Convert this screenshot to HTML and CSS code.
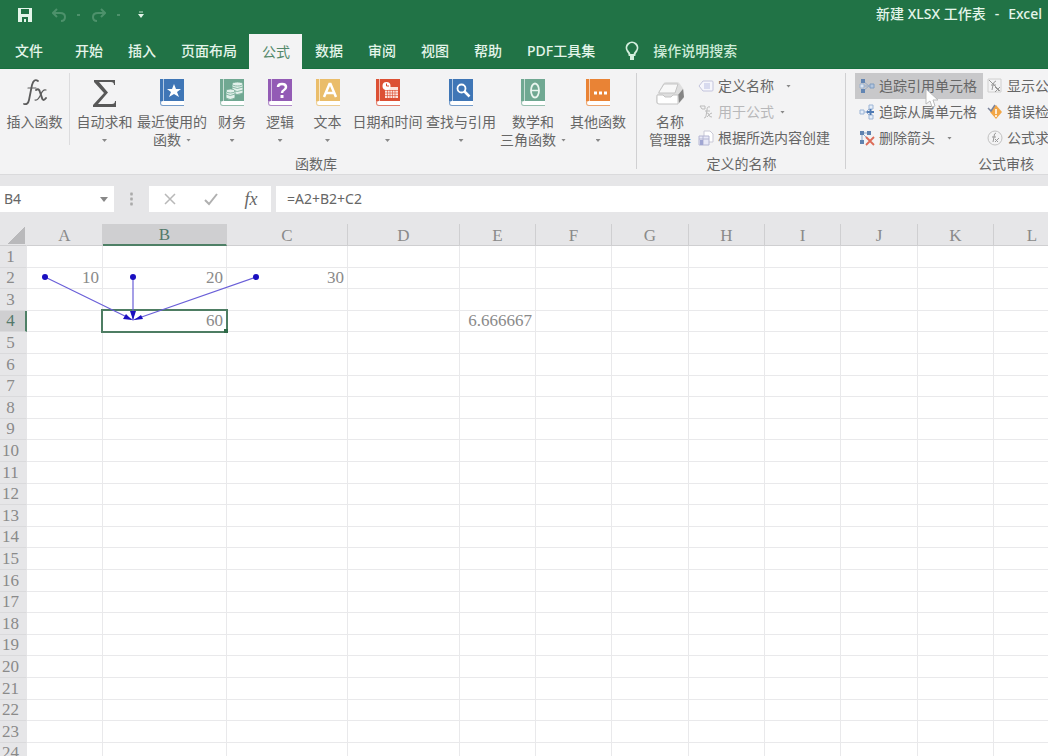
FILE: index.html
```html
<!DOCTYPE html>
<html lang="zh-CN">
<head>
<meta charset="utf-8">
<title>新建 XLSX 工作表 - Excel</title>
<link rel="stylesheet" href="styles.css">
</head>
<body>
<svg class="defs" aria-hidden="true">
  <symbol id="book" viewBox="0 0 26 29">
    <path d="M1 1h24v22H1z" fill="currentColor"/>
    <path d="M1 23h24v4H3q-2 0-2-2z" fill="#fff"/>
    <path d="M1 23v2q0 3 3 3h21v-1H4q-2 0-2-2t2-2z" fill="currentColor" fill-opacity=".7"/>
    <path d="M4.500 1v22" stroke="#fff" stroke-opacity=".6" stroke-width="1"/>
  </symbol>
</svg>

<header class="top">
  <div class="titlebar">
    <div class="quick">
      <button aria-label="保存"><svg width="14" height="14" viewBox="0 0 14 14"><path d="M0 0h14v14H0z" fill="#e4f5ea"/><path d="M3 1h8v5H3zM4 9h6v5H8v-3H6v3H4z" fill="#217346"/></svg></button>
      <button aria-label="撤消"><svg width="14" height="14" viewBox="0 0 14 14" class="faint"><path d="M5 1 1 5l4 4M1 5h7q5 0 5 4t-4 4"/></svg></button>
      <span class="caret"></span>
      <button aria-label="恢复"><svg width="14" height="14" viewBox="0 0 14 14" class="faint"><path d="m9 1 4 4-4 4M13 5H6Q1 5 1 9t4 4"/></svg></button>
      <span class="caret"></span>
      <button aria-label="自定义快速访问工具栏" class="more"><svg width="6" height="8" viewBox="0 0 6 8"><path d="M1 1h4" stroke="#b9dcc7"/><path d="M0 3h6L3 7z" fill="#e4f5ea"/></svg></button>
    </div>
    <div class="doc"><span>新建 XLSX 工作表</span><span>-</span><span>Excel</span></div>
  </div>
  <nav class="tabs">
    <button class="file">文件</button><button>开始</button><button>插入</button><button>页面布局</button><button class="active">公式</button><button>数据</button><button>审阅</button><button>视图</button><button>帮助</button><button>PDF工具集</button>
    <button class="tell"><svg width="14" height="20" viewBox="0 0 14 20"><path d="M4.500 14q0-2-2-4A5.500 5.500 0 1 1 11.500 10q-2 2-2 4z" fill="none" stroke="#d3eedd" stroke-width="1.800"/><path d="M5 16h4M5 18h4" stroke="#d3eedd" stroke-width="2"/></svg>操作说明搜索</button>
  </nav>
</header>

<main>
<section class="ribbon">
  <div class="group library">
    <div class="tools">
      <button class="big insert"><svg class="ic" width="30" height="30" viewBox="0 0 30 30"><g fill="none" stroke="#5c5c5c" stroke-linecap="round"><path d="M18 3q-4-3-6 4L9 22q-1 5-5 4" stroke-width="1.800"/><path d="M8 10h8" stroke-width="1.200"/><path d="M16 12q3-2 4 2l2 6q1 4 4 0" stroke-width="2"/><path d="M26 12q-3-1-5 4-3 7-6 6" stroke-width="1.200"/></g></svg>插入函数</button>
      <button class="big"><svg class="ic" width="26" height="30" viewBox="0 0 26 30"><path d="M2 2h21v5h-1q0-3-3-3H7l9 10.500L6 26h14q3 0 3-3h1v6H1v-2l11-12L2 4z" fill="#585858"/></svg>自动求和<i class="drop"></i></button>
      <button class="big"><svg class="ic blue" width="26" height="30" viewBox="0 0 26 30"><use href="#book" width="26" height="29"/><path d="m15 6 2 5h5l-4 3 2 5-5-3-5 3 2-5-4-3h5z" fill="#fff"/></svg>最近使用的<span>函数<i class="drop"></i></span></button>
      <button class="big"><svg class="ic teal" width="26" height="30" viewBox="0 0 26 30"><use href="#book" width="26" height="29"/><g fill="#e3f1eb" stroke="#70a892" stroke-width=".8"><path d="M13 6v9q5 3 11 0V6z"/><ellipse cx="18.500" cy="6" rx="5.500" ry="2"/><path d="M13 9q5 3 11 0M13 12q5 3 11 0" fill="none"/><path d="M7 13v7q4 3 9 0v-7z"/><ellipse cx="11.500" cy="13" rx="4.500" ry="2"/><path d="M7 16q4 3 9 0" fill="none"/></g></svg>财务<i class="drop"></i></button>
      <button class="big"><svg class="ic purple" width="26" height="30" viewBox="0 0 26 30"><use href="#book" width="26" height="29"/><path d="M11 9q0-3 4-3t4 3q0 2-2 3t-2 3" fill="none" stroke="#fff" stroke-width="2.500"/><path d="M13.500 17h3v3h-3z" fill="#fff"/></svg>逻辑<i class="drop"></i></button>
      <button class="big"><svg class="ic gold" width="26" height="30" viewBox="0 0 26 30"><use href="#book" width="26" height="29"/><path d="m9 19 5.500-13h1L21 19M11 15h8" fill="none" stroke="#fff" stroke-width="2.500"/></svg>文本<i class="drop"></i></button>
      <button class="big"><svg class="ic red" width="26" height="30" viewBox="0 0 26 30"><use href="#book" width="26" height="29"/><path d="M10 9h13v11H10z" fill="#fbe3dd"/><path d="M10 12.500h13M10 15h13M10 17.500h13M12.500 12v8M15 12v8M17.500 12v8M20 12v8" stroke="#dc4a2e" stroke-width=".6"/><circle cx="11.500" cy="8" r="4" fill="#fff"/><path d="M11.500 5.500V8H14" fill="none" stroke="#dc4a2e"/></svg>日期和时间<i class="drop"></i></button>
      <button class="big"><svg class="ic blue" width="26" height="30" viewBox="0 0 26 30"><use href="#book" width="26" height="29"/><circle cx="13.500" cy="10.500" r="4" fill="none" stroke="#fff" stroke-width="1.800"/><path d="m16.500 13.500 5 5" stroke="#fff" stroke-width="2.500"/></svg>查找与引用<i class="drop"></i></button>
      <button class="big"><svg class="ic teal" width="26" height="30" viewBox="0 0 26 30"><use href="#book" width="26" height="29"/><ellipse cx="15" cy="12.500" rx="4" ry="7" fill="none" stroke="#e9f5ef" stroke-width="1.800"/><path d="M11 12.500h8" stroke="#e9f5ef" stroke-width="1.500"/></svg>数学和<span>三角函数<i class="drop"></i></span></button>
      <button class="big"><svg class="ic orange" width="26" height="30" viewBox="0 0 26 30"><use href="#book" width="26" height="29"/><path d="M9 13.500h3v3H9zM14 13.500h3v3h-3zM19 13.500h3v3h-3z" fill="#fff"/></svg>其他函数<i class="drop"></i></button>
    </div>
    <h2>函数库</h2>
  </div>

  <div class="group names">
    <div class="tools">
      <button class="big"><svg class="ic" width="30" height="30" viewBox="0 0 30 30"><path d="M2 17 8 6q1-2 3-2h11q2 0 3 2l4 6v8l-6 6H3q-2 0-2-3v-4z" fill="#dedede"/><path d="m23 17 5-6 1 8-5 6z" fill="#858585"/><path d="M4 14 9 6h14l-3 9H4z" fill="#f8f8f8" stroke="#c4c4c4"/><path d="M2 17h6l2 2h6l2-2h5v9H4q-2 0-2-2z" fill="#fff" stroke="#c4c4c4"/></svg>名称<span>管理器</span></button>
      <div class="stack">
        <button><svg width="16" height="16" viewBox="0 0 16 16"><path d="M5 3h9q1 0 1 1v8q0 1-1 1H5L1 8z" fill="#f6f6fc" stroke="#c3c4dc"/><path d="M6 6h6M6 8h6M6 10h6" stroke="#b9bee2"/></svg>定义名称<i class="drop far"></i></button>
        <button disabled><svg width="16" height="16" viewBox="0 0 16 16" fill="none" stroke="#bbb"><path d="M2 2h5v3H4zM12 3q-3-1-3 3l-1 6q0 2-2 2M7 7h5M9 9q2 0 2 2t3 2M14 9q-2 0-5 4"/></svg>用于公式<i class="drop"></i></button>
        <button><svg width="16" height="16" viewBox="0 0 16 16"><path d="M6 1h6l3 3v8H6z" fill="#fff" stroke="#c9c9d6"/><path d="M1 6h10v9H1z" fill="#e8e9f7" stroke="#b4b6d2"/><path d="M1 9h10M5 6v9" stroke="#b4b6d2"/><path d="M2 10h3v5H2z" fill="#a0a6d2"/></svg>根据所选内容创建</button>
      </div>
    </div>
    <h2>定义的名称</h2>
  </div>

  <div class="group audit">
    <div class="tools">
      <div class="stack">
        <button class="hover"><svg width="16" height="16" viewBox="0 0 16 16"><path d="m4 3 6 5-6 5M5 8h6" fill="none" stroke="#97abc7"/><path d="M2 1h4v4H2zM2 11h4v4H2z" fill="#6285b3"/><path d="M1 6h4v4H1z" fill="#dce6f2" stroke="#9cb3d0"/><path d="M11 6h4v4h-4z" fill="#b3c6df" stroke="#7f9cc0"/></svg>追踪引用单元格<svg class="cursor" width="14" height="20" viewBox="0 0 14 20"><path d="M1 1v15l4-3 2 6 3-1-2-6h5z" fill="#fff" stroke="#bbb"/></svg></button>
        <button><svg width="16" height="16" viewBox="0 0 16 16"><path d="M4 8h5M12 3 7 8l5 5" fill="none" stroke="#9bafd0"/><path d="M1 6h4v4H1zM10 1h4v4h-4zM10 11h4v4h-4z" fill="#e5edf8" stroke="#9cb5d6"/><path d="M8 8h7M11.500 5v6" stroke="#4f7bb5" stroke-width="2"/></svg>追踪从属单元格</button>
        <button><svg width="16" height="16" viewBox="0 0 16 16"><path d="M3 3h8M3 3v10M4 4l5 5" stroke="#8fa9cb"/><path d="M1 1h4v4H1zM8 1h4v4H8zM1 10h4v4H1z" fill="#5f82af"/><path d="m7 7 8 8M15 7l-8 8" stroke="#dc6b58" stroke-width="1.800"/></svg>删除箭头<i class="drop far"></i></button>
      </div>
      <div class="stack">
        <button><svg width="16" height="16" viewBox="0 0 16 16" fill="none" stroke="#999"><path d="M1 1h13v13H1z" stroke="#d0d0d0"/><path d="m2 2 11 11M9 3q-2 0-3 4l-1 5M4 7h5M8 9l4 4M13 9l-5 5"/></svg>显示公式</button>
        <button><svg width="16" height="16" viewBox="0 0 16 16"><path d="m9 1 6 7-6 7-6-7z" fill="#f2a646"/><path d="M9 5v5M9 11v2" stroke="#fff" stroke-width="1.500"/><path d="m1 4 3 3 4-6" fill="none" stroke="#7a829a" stroke-width="1.500"/></svg>错误检查<i class="drop"></i></button>
        <button><svg width="16" height="16" viewBox="0 0 16 16" fill="none" stroke="#999"><circle cx="8" cy="8" r="7" stroke="#c2c2c2"/><path d="M9 3q-2 0-2 4l-1 5M5 7h4M8 9l3 3M12 8l-4 4"/></svg>公式求值</button>
      </div>
    </div>
    <h2>公式审核</h2>
  </div>
</section>

<section class="formula">
  <div class="namebox"><input aria-label="名称框" value="B4"><button aria-label="名称列表"><svg width="8" height="5" viewBox="0 0 8 5"><path d="M0 0h8L4 5z" fill="#888"/></svg></button></div>
  <span class="grip"></span>
  <div class="actions">
    <button aria-label="取消"><svg width="14" height="14" viewBox="0 0 14 14"><path d="m2 2 10 10M12 2 2 12" stroke="#b8b8b8" stroke-width="1.500"/></svg></button>
    <button aria-label="输入"><svg width="14" height="14" viewBox="0 0 14 14"><path d="m1 8 4 4 8-10" fill="none" stroke="#b0b0b0" stroke-width="2"/></svg></button>
    <button aria-label="插入函数" class="fx">fx</button>
  </div>
  <input class="entry" aria-label="编辑栏" value="=A2+B2+C2">
</section>

<section class="sheet">
  <table id="grid"></table>
  <svg class="arrows" width="350" height="110" viewBox="0 0 350 110">
    <g stroke="#6a5fd8" stroke-width="1.200"><path d="M45 53 133 96M133 53v42M256 53 133 96"/></g>
    <g fill="#1a0fc0"><circle cx="45" cy="53" r="3"/><circle cx="133" cy="53" r="3"/><circle cx="256" cy="53" r="3"/><path d="m132 96-9-1 3-5zM133 96l-3-9h6zM134 96l7-5 2 4z"/></g>
  </svg>
</section>
</main>
<script src="script.js"></script>
</body>
</html>
```

FILE: styles.css
```css
* { box-sizing: border-box; }
body {
  margin: 0;
  height: 100vh;
  overflow: hidden;
  background: #e6e6e8;
  color: #666;
  font: 14px/18px "Noto Sans", "Noto Sans CJK SC", sans-serif;
}
body, main { display: flex; flex-direction: column; }
main { flex: 1; min-height: 0; }
button, input { font: inherit; color: inherit; border: 0; padding: 0; background: none; white-space: nowrap; }
h2 { margin: 0; font-size: 14px; font-weight: 400; text-align: center; }
.defs { position: absolute; width: 0; height: 0; }

.top { background: #217346; color: #e4f5ea; border-bottom: 1px solid #17703f; }
.titlebar { height: 34px; display: flex; justify-content: space-between; padding: 0 6px 6px 18px; }
.quick { display: flex; align-items: center; padding-top: 2px; }
.quick button { display: flex; }
.quick button:nth-child(2) { margin-left: 20px; }
.quick .caret { width: 3px; height: 2px; margin: 0 12px 0 11px; background: #4d916b; }
.quick .more { margin-left: 6px; }
.faint { fill: none; stroke: #4d916b; stroke-width: 2; }
.doc { display: flex; align-items: center; gap: 9px; font-weight: 500; }
.tabs { display: flex; height: 34px; font-weight: 500; }
.tabs button { padding: 0 12px 0 13px; }
.tabs .file { padding: 0 19px 0 15px; }
.tabs .active { margin-bottom: -1px; background: #f3f3f4; color: #53896b; font-weight: 400; }
.tabs .tell { display: flex; align-items: center; gap: 14px; margin-left: 5px; color: #cdebd8; }

.ribbon { display: flex; flex: none; height: 106px; overflow: hidden; background: #f3f3f4; border-bottom: 1px solid #dadadc; }
.group { position: relative; flex: none; display: flex; flex-direction: column; justify-content: space-between; padding: 4px 0 1px; }
.group::after { content: ""; position: absolute; right: 0; top: 4px; bottom: 5px; width: 1px; background: #d0d0d2; }
.library { width: 637px; padding-right: 5px; }
.names { width: 209px; }
.audit { width: 320px; }
.library .tools { display: grid; grid-template-columns: 73px 63px 72px 48px 48px 47px 73px 74px 70px 60px; }
.names .tools, .audit .tools { display: flex; }
.big { display: flex; flex-direction: column; align-items: center; padding-top: 5px; min-width: 0; }
.big .ic { margin-bottom: 5px; flex: none; }
.big span { display: flex; align-items: center; }
.big > .drop { margin: 8px 0 0; }
.insert { height: 72px; margin-right: 3px; border-right: 1px solid #dcdcde; }
.drop { width: 5px; height: 3px; margin-left: 5px; background: #888; clip-path: polygon(0 0, 100% 0, 50% 100%); }
.blue { color: #3f76b6; }
.teal { color: #70a892; }
.purple { color: #935bb5; }
.gold { color: #eabd6a; }
.red { color: #dc5034; }
.orange { color: #e98335; }
.names .big { width: 58px; margin-left: 4px; }
.stack { display: flex; flex-direction: column; }
.stack button { position: relative; display: flex; align-items: center; gap: 4px; height: 26px; padding: 0 6px 0 4px; }
.names .stack { margin-left: -5px; }
.stack svg { flex: none; }
.stack .drop { margin-left: 2px; }
.stack .far { margin-left: 8px; }
.stack button:disabled { color: #b8b8ba; }
.audit .stack:first-child { padding-left: 9px; }
.stack .hover { background: #c8c8ca; }
.stack .cursor { position: absolute; left: 70px; top: 15px; z-index: 1; }

.formula { display: flex; flex: none; height: 26px; margin: 11px 0 12px; }
.formula > div, .entry { background: #fff; }
.namebox { display: flex; width: 114px; padding: 0 6px 0 4px; }
.namebox input { min-width: 0; flex: 1; }
.namebox button { display: flex; align-items: center; }
.grip { width: 35px; background: radial-gradient(circle, #aaa 1px, transparent 2px) center / 35px 5px repeat-y content-box; padding: 6px 0; }
.actions { display: flex; justify-content: space-around; width: 122px; margin-right: 5px; }
.actions button { display: flex; align-items: center; }
.actions .fx { font: italic 18px/26px "Liberation Serif", serif; }
.entry { flex: 1; min-width: 0; padding: 0 11px; }

.sheet { position: relative; flex: 1; min-height: 0; overflow: hidden; background: #fff; }
.sheet table { border-collapse: separate; border-spacing: 0; table-layout: fixed; width: 1071px; font: 17px/20px "Liberation Serif", serif; color: #8a8a8a; }
.sheet th, .sheet td { height: 22px; padding: 0 3px 0 0; text-align: right; border-right: 1px solid #e9e9eb; border-bottom: 1px solid #e9e9eb; }
.sheet tbody tr:nth-child(5n+2) > *, .sheet tbody tr:nth-child(5n+4) > * { height: 21px; }
.sheet th { background: #e6e6e8; font-weight: 400; text-align: center; border-color: #cfcfd1; }
.sheet thead th { padding: 2px 0 0; line-height: 19px; }
.sheet tbody th { padding: 0 5px 0 0; border-color: #e6e6e8 #e6e6e8 #dadadc; }
.sheet thead th.on { background: #cfcfd1; color: #53796a; border-bottom: 2px solid #4e8066; line-height: 18px; }
.sheet tbody th.on { padding-right: 4px; background: #cfcfd1; color: #53796a; border-right: 2px solid #4e8066; }
.sheet .corner { background: linear-gradient(135deg, transparent 50%, #b9b9bb 50%) 7px 3px / 18px 17px no-repeat #e6e6e8; border-right-color: #e6e6e8; }
.sheet td.sel { position: relative; }
.sel::before { content: ""; position: absolute; inset: -2px; border: 2px solid #4e7d63; }
.sel::after { content: ""; position: absolute; right: -2px; bottom: -2px; width: 4px; height: 4px; background: #2e6a48; }
.arrows { position: absolute; left: 0; top: 0; pointer-events: none; }
.rowhead { width: 27px; }
.a, .std { width: 76px; }
.b { width: 124px; }
.c { width: 121px; }
.d { width: 112px; }
.wide { width: 77px; }
```

FILE: script.js
```js
const letters = "ABCDEFGHIJKL".split("");
const widths = ["rowhead", "a", "b", "c", "d", "std", "std", "wide", "std", "std", "wide", "std", "wide"];
const values = { A2: "10", B2: "20", C2: "30", B4: "60", E4: "6.666667" };

let html = "<colgroup>" + widths.map(w => `<col class="${w}">`).join("") + "</colgroup>";
html += '<thead><tr><th class="corner"></th>';
html += letters.map(l => `<th scope="col"${l === "B" ? ' class="on"' : ""}>${l}</th>`).join("");
html += "</tr></thead><tbody>";
for (let r = 1; r <= 24; r++) {
  html += `<tr><th scope="row"${r === 4 ? ' class="on"' : ""}>${r}</th>`;
  html += letters.map(l => {
    const key = l + r;
    return `<td${key === "B4" ? ' class="sel"' : ""}>${values[key] || ""}</td>`;
  }).join("");
  html += "</tr>";
}
document.getElementById("grid").innerHTML = html + "</tbody>";
```
